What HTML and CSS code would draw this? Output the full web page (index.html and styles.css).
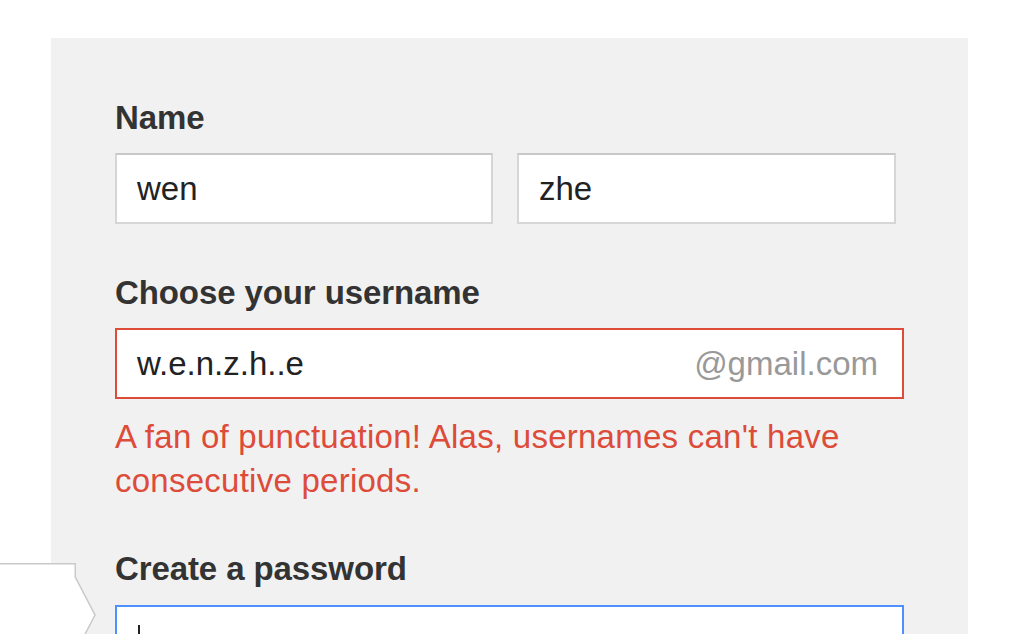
FILE: index.html
```html
<!DOCTYPE html>
<html lang="en">
<head>
    <meta charset="UTF-8">
    <meta name="viewport" content="width=device-width, initial-scale=1.0">
    <title>Create your Google Account</title>
    <link rel="stylesheet" href="styles.css">
</head>
<body>
<div class="panel">
    <div class="form">
        <label class="label">Name</label>
        <div class="name-row">
            <div class="field">wen</div>
            <div class="field">zhe</div>
        </div>

        <label class="label label-gap">Choose your username</label>
        <div class="field field-error">
            <span>w.e.n.z.h..e</span>
            <span class="suffix">@gmail.com</span>
        </div>
        <p class="error">A fan of punctuation! Alas, usernames can't have consecutive periods.</p>

        <label class="label label-pass">Create a password</label>
        <div class="field field-focus"><span class="caret"></span></div>
    </div>
</div>

<!-- bubble hint sticking in from the left -->
<svg class="tip" width="100" height="80" viewBox="0 0 100 80">
    <path d="M-2 0 H75.5 V14 L95 52 L75.5 90 V100 H-2 Z" fill="#fff"/>
    <path d="M-2 0.75 H75.25 V14 L95 52 L75.25 90" fill="none" stroke="#c9c9c9" stroke-width="1.5"/>
</svg>
</body>
</html>
```

FILE: styles.css
```css
body {
    margin: 0;
    background-color: #fff;
    font-family: "Liberation Sans", Arial, sans-serif;
    color: #222;
    overflow: hidden;
}
.panel {
    margin: 38px 0 0 51px;
    width: 917px;
    min-height: 596px;
    background-color: #f1f1f1;
    padding: 61px 0 0 64px;
    box-sizing: border-box;
}
.form {
    width: 789px;
}
.label {
    display: block;
    font-size: 33px;
    font-weight: bold;
    line-height: 38px;
    color: #333;
    margin-bottom: 16px;
    letter-spacing: -0.1px;
}
.label-gap {
    margin-top: 50px;
}
.label-pass {
    margin-top: 47px;
    margin-bottom: 17px;
}
.name-row {
    display: grid;
    grid-template-columns: 378px 379px;
    gap: 24px;
}
.field {
    height: 71px;
    box-sizing: border-box;
    background-color: #fff;
    border: 2px solid #d6d6d6;
    border-top-color: #c8c8c8;
    padding: 0 20px;
    font-size: 33px;
    line-height: 67px;
    color: #222;
}
.field-error {
    display: flex;
    justify-content: space-between;
    border-color: #dd4b39;
    padding-right: 24px;
}
.suffix {
    color: #999;
}
.error {
    margin: 16px 0 0;
    font-size: 33px;
    line-height: 44px;
    color: #dd4b39;
    letter-spacing: 0.25px;
}
.field-focus {
    border-color: #4d90fe;
    padding-left: 21px;
}
.caret {
    display: inline-block;
    width: 2px;
    height: 36px;
    background-color: #222;
    vertical-align: middle;
}
.tip {
    position: absolute;
    left: 0;
    top: 563px;
}
```
